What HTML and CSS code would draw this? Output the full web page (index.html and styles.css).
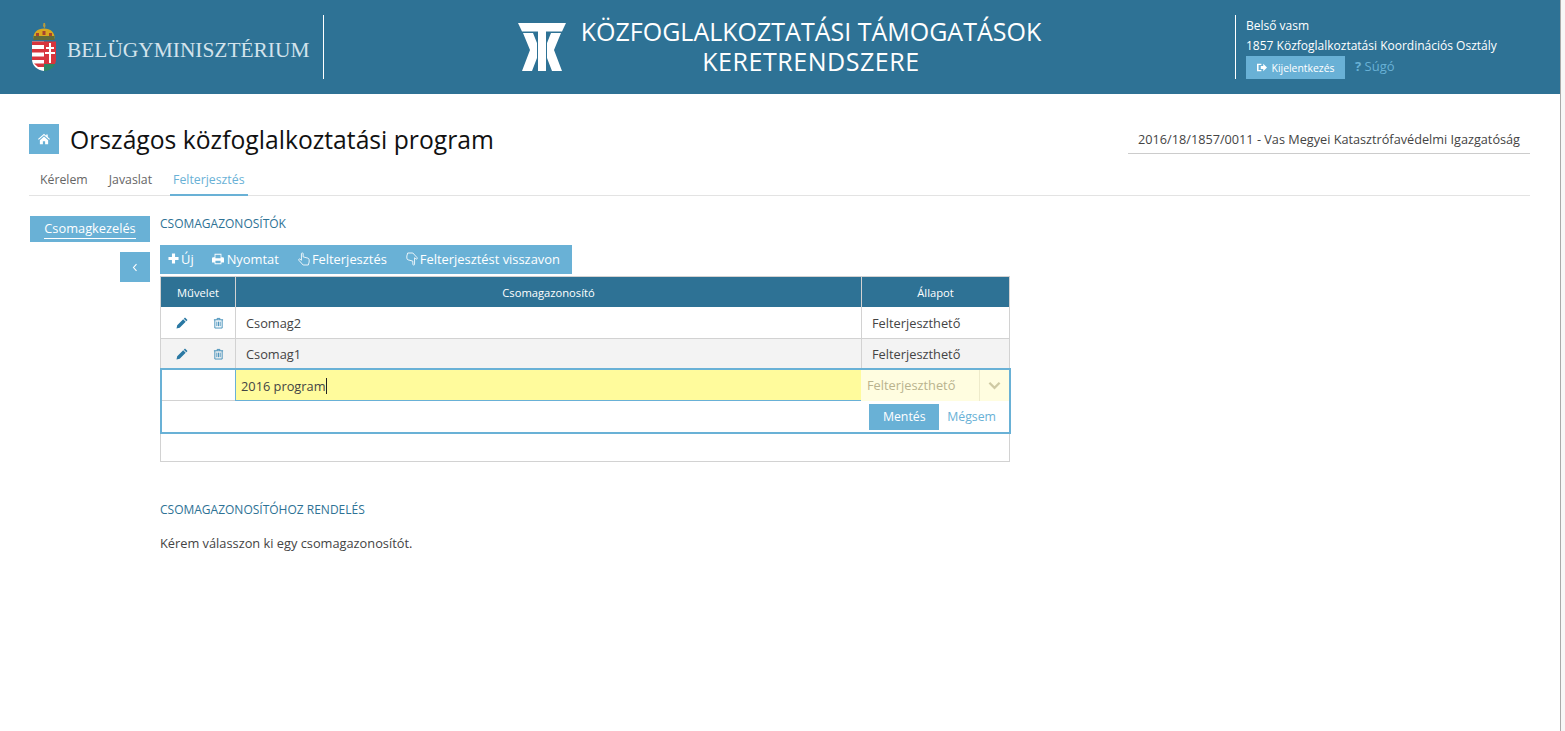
FILE: index.html
```html
<!DOCTYPE html>
<html lang="hu">
<head>
    <meta charset="utf-8">
    <title>Közfoglalkoztatási támogatások keretrendszere</title>
    <link rel="stylesheet" href="styles.css">
</head>
<body>
<div class="page">
    <header class="top-bar">
        <div class="ministry">
            <svg class="crest" viewBox="0 0 24 48" aria-hidden="true">
                <path d="M11.500 0h1.500l.5 3-1 2.500L11 3z" fill="#b79a3c"/>
                <path d="M1.500 15.500c-.5-6 4-10 10.500-10s11 4 10.500 10z" fill="#d9a81f"/>
                <path d="M1.500 13h21v4h-21z" fill="#5f6b3a"/>
                <path d="M4 10h3v3H4zM10.500 8h3v4h-3zM17 10h3v3h-3z" fill="#a5432e"/>
                <path d="M0 18.500h12V48C5 47 0 43 0 36z" fill="#fff"/>
                <path d="M0 18.500h12V22H0zM0 26h12v3.500H0zM0 33.500h12V37H0zM2 40.500h10V44H6z" fill="#d8353d"/>
                <path d="M12 18.500h12V36c0 2-.3 3.500-1 5H12z" fill="#d8353d"/>
                <path d="M12 41h11c-1.500 4-5 6.500-11 7z" fill="#2f8566"/>
                <path d="M17 20h2v4h3v2h-3v3h4v2h-4v9h-2v-9h-4v-2h4v-3h-3v-2h3z" fill="#fff"/>
            </svg>
            <span class="ministry-name">BELÜGYMINISZTÉRIUM</span>
        </div>
        <div class="app-title">
            <svg class="kt-logo" viewBox="0 0 48 48" aria-hidden="true">
                <path d="M0 0h48l-4 8.500H4z" fill="#fff"/>
                <path d="M5 10h10l4 10v15l-5 13H4l8-21z" fill="#fff"/>
                <path d="M43 10H33l-4 10v15l5 13h10l-8-21z" fill="#fff"/>
                <path d="M20 8h8v40h-8z" fill="#fff"/>
            </svg>
            <h2 class="app-name">
                <span class="app-line">KÖZFOGLALKOZTATÁSI TÁMOGATÁSOK</span>
                <span class="app-line app-line-second">KERETRENDSZERE</span>
            </h2>
        </div>
        <div class="user-box">
            <div class="user-line">Belső vasm</div>
            <div class="user-line">1857 Közfoglalkoztatási Koordinációs Osztály</div>
            <div class="user-actions">
                <a class="logout" href="#">
                    <svg class="icon icon-xs" viewBox="0 0 16 14"><path d="M0 1h7v2H2.500v8H7v2H0zM6 4.500h4V1l6 6-6 6V9.500H6z"/></svg>
                    Kijelentkezés
                </a>
                <a class="help" href="#"><b>?</b> Súgó</a>
            </div>
        </div>
    </header>

    <div class="content">
        <div class="title-row">
            <div class="title-left">
                <a class="home-btn" href="#">
                    <svg class="icon" viewBox="0 0 16 14"><path d="M8 0l3 2.600V1h2v3.400L16 7l-1 1-7-6-7 6-1-1zM2.500 8.500L8 3.800l5.500 4.700V14H9.500v-4h-3v4h-4z"/></svg>
                </a>
                <h1 class="page-title">Országos közfoglalkoztatási program</h1>
            </div>
            <div class="case-ref">2016/18/1857/0011 - Vas Megyei Katasztrófavédelmi Igazgatóság</div>
        </div>

        <nav class="tabs">
            <a class="tab" href="#">Kérelem</a>
            <a class="tab" href="#">Javaslat</a>
            <a class="tab tab-active" href="#">Felterjesztés</a>
        </nav>

        <div class="columns">
            <aside class="sidebar">
                <a class="side-item" href="#"><span>Csomagkezelés</span></a>
                <a class="side-toggle" href="#">
                    <svg class="icon icon-angle" viewBox="0 0 8 12"><path d="M6 1.500L2 6l4 4.500" fill="none" stroke="currentColor" stroke-width="1.500"/></svg>
                </a>
            </aside>

            <main class="main">
                <h3 class="section-title">Csomagazonosítók</h3>

                <div class="toolbar">
                    <a class="tool tool-new" href="#">
                        <svg class="icon icon-plus" viewBox="0 0 12 12"><path d="M4.300 .5h3.400v3.800h3.800v3.400H7.700v3.800H4.300V7.700H.5V4.300h3.800z"/></svg>
                        Új
                    </a>
                    <a class="tool" href="#">
                        <svg class="icon" viewBox="0 0 14 12"><path d="M3 0h8v4h1.500A1.500 1.500 0 0 1 14 5.500V10h-3v2H3v-2H0V5.500A1.500 1.500 0 0 1 1.500 4H3zm1 1v4h6V1zm0 7v3h6V8z" fill-rule="evenodd"/></svg>
                        Nyomtat
                    </a>
                    <a class="tool tool-hand" href="#">
                        <svg class="icon icon-hand" viewBox="0 0 14 15"><path d="M4 1.200c0-1 2-1 2 0V5l5.500 1.500c1 .3 1.500 1 1.500 2V11l-1 3.500H6L1 9c-.8-1 .6-2.200 1.500-1.200L4 9z" fill="none" stroke="currentColor"/></svg>
                        Felterjesztés
                    </a>
                    <a class="tool tool-hand" href="#">
                        <svg class="icon icon-hand" viewBox="0 0 14 15"><path d="M10 13.800c0 1-2 1-2 0V10L2.500 8.500c-1-.3-1.500-1-1.500-2V4l1-3.500h6L13 6c.8 1-.6 2.200-1.500 1.200L10 6z" fill="none" stroke="currentColor"/></svg>
                        Felterjesztést visszavon
                    </a>
                </div>

                <div class="grid">
                    <div class="grid-row grid-head">
                        <div class="cell">Művelet</div>
                        <div class="cell">Csomagazonosító</div>
                        <div class="cell">Állapot</div>
                    </div>
                    <div class="grid-row grid-row-first">
                        <div class="cell cell-actions">
                            <svg class="icon row-icon pen" viewBox="0 0 12 12"><path d="M9 .500l2.500 2.500-1.200 1.200-2.500-2.500zM7.200 2.300l2.500 2.500-6 6L.500 11.500l.7-3.200z"/></svg>
                            <svg class="icon row-icon bin" viewBox="0 0 12 12"><path d="M1 2.500h10M4.500 2.500V1h3v1.500M2 2.500v9h8v-9M4.200 4.500v5M6 4.500v5M7.800 4.500v5" fill="none" stroke="currentColor"/></svg>
                        </div>
                        <div class="cell">Csomag2</div>
                        <div class="cell">Felterjeszthető</div>
                    </div>
                    <div class="grid-row grid-row-alt">
                        <div class="cell cell-actions">
                            <svg class="icon row-icon pen" viewBox="0 0 12 12"><path d="M9 .500l2.500 2.500-1.200 1.200-2.500-2.500zM7.200 2.300l2.500 2.500-6 6L.500 11.500l.7-3.200z"/></svg>
                            <svg class="icon row-icon bin" viewBox="0 0 12 12"><path d="M1 2.500h10M4.500 2.500V1h3v1.500M2 2.500v9h8v-9M4.200 4.500v5M6 4.500v5M7.800 4.500v5" fill="none" stroke="currentColor"/></svg>
                        </div>
                        <div class="cell">Csomag1</div>
                        <div class="cell">Felterjeszthető</div>
                    </div>
                    <div class="edit-box">
                        <div class="edit-fields">
                            <div class="edit-blank"></div>
                            <div class="edit-input">2016 program<span class="caret"></span></div>
                            <div class="edit-select">
                                <span class="edit-select-value">Felterjeszthető</span>
                                <span class="edit-select-arrow">
                                    <svg class="icon chevron" viewBox="0 0 14 9"><path d="M1.500 1.500L7 7l5.500-5.500" fill="none" stroke="currentColor" stroke-width="2.500"/></svg>
                                </span>
                            </div>
                        </div>
                        <div class="edit-buttons">
                            <a class="save-btn" href="#">Mentés</a>
                            <a class="cancel-link" href="#">Mégsem</a>
                        </div>
                    </div>
                    <div class="grid-footer"></div>
                </div>

                <h3 class="section-title section-title-second">Csomagazonosítóhoz rendelés</h3>
                <p class="hint">Kérem válasszon ki egy csomagazonosítót.</p>
            </main>
        </div>
    </div>
</div>
<div class="scroll-track"></div>
</body>
</html>
```

FILE: styles.css
```css
* {
    box-sizing: border-box;
}
html, body {
    height: 100%;
}
body {
    margin: 0;
    display: flex;
    overflow: hidden;
    font-family: "Open Sans", sans-serif;
    font-size: 12.800px;
    color: #444;
    background-color: #fff;
}
a {
    text-decoration: none;
    color: inherit;
}
.page {
    width: 1560px;
    flex: none;
}
.scroll-track {
    flex: 1;
    background-color: #f7f7f7;
    border-left: 1px solid #a9a9a9;
}

.icon {
    width: 12px;
    height: 12px;
    fill: currentColor;
    flex: none;
}

/* header */
.top-bar {
    height: 94px;
    padding-top: 15px;
    background-color: #2e7295;
    color: #fff;
    display: flex;
    align-items: flex-start;
}
.ministry {
    width: 324px;
    height: 64px;
    padding-left: 32px;
    border-right: 1px solid #fff;
    display: flex;
    align-items: center;
}
.crest {
    width: 24px;
    height: 48px;
    flex: none;
}
.ministry-name {
    margin: 6px 0 0 11px;
    font-family: "Liberation Serif", serif;
    font-size: 21.400px;
    color: #d3e3ec;
    white-space: nowrap;
}
.app-title {
    width: 911px;
    height: 64px;
    padding-left: 194px;
    display: flex;
    align-items: center;
}
.kt-logo {
    width: 48px;
    height: 48px;
    flex: none;
}
.app-name {
    width: 490px;
    margin: -2px 0 0;
    font-size: 25px;
    font-weight: 400;
    line-height: 30px;
    text-align: center;
    white-space: nowrap;
}
.app-line {
    display: block;
}
.app-line-second {
    letter-spacing: .55px;
}
.user-box {
    height: 64px;
    padding: 1px 0 0 10px;
    border-left: 1px solid #fff;
    font-size: 12px;
}
.user-line {
    height: 20px;
    line-height: 20px;
    white-space: nowrap;
}
.user-actions {
    display: flex;
    align-items: flex-start;
}
.logout {
    width: 99px;
    height: 23px;
    background-color: #69b1d6;
    font-size: 10.400px;
    display: flex;
    align-items: center;
    justify-content: center;
    gap: 5px;
}
.icon-xs {
    width: 10px;
    height: 9px;
}
.help {
    margin-left: 10px;
    font-size: 13px;
    line-height: 20px;
    color: #69b1d6;
}

/* title */
.content {
    padding: 0 30px 0 29px;
}
.title-row {
    padding-top: 30px;
    display: flex;
    justify-content: space-between;
}
.title-left {
    display: flex;
    align-items: flex-start;
}
.home-btn {
    width: 30px;
    height: 30px;
    background-color: #69b1d6;
    color: #fff;
    display: flex;
    align-items: center;
    justify-content: center;
}
.page-title {
    margin: 0 0 0 11px;
    padding-top: 2px;
    font-size: 24.700px;
    font-weight: 400;
    line-height: 28px;
    color: #111;
}
.case-ref {
    height: 30px;
    padding: 0 10px;
    border-bottom: 1px solid #ccc;
    font-size: 12.700px;
    line-height: 30px;
    white-space: nowrap;
}

/* tabs */
.tabs {
    height: 42px;
    padding: 15px 0 0 8px;
    border-bottom: 1px solid #e3e3e3;
    font-size: 12.300px;
    display: flex;
    gap: 15px;
}
.tab {
    height: 27px;
    padding: 2px 3px 0;
    color: #666;
}
.tab-active {
    color: #69b1d6;
    border-bottom: 2px solid #69b1d6;
}

/* columns */
.columns {
    padding-top: 20px;
    display: flex;
}
.sidebar {
    width: 121px;
    margin-right: 10px;
    flex: none;
    display: flex;
    flex-direction: column;
    align-items: flex-end;
    gap: 10px;
}
.side-item {
    width: 120px;
    height: 26px;
    background-color: #69b1d6;
    color: #fff;
    line-height: 25px;
    text-align: center;
}
.side-item span {
    border-bottom: 1px solid #fff;
    padding-bottom: 1px;
}
.side-toggle {
    width: 30px;
    height: 30px;
    background-color: #69b1d6;
    color: #fff;
    display: flex;
    align-items: center;
    justify-content: center;
}
.icon-angle {
    width: 8px;
    height: 9px;
}
.main {
    width: 850px;
    flex: none;
}
.section-title {
    margin: 0;
    height: 29px;
    font-size: 12px;
    font-weight: 400;
    line-height: 16px;
    text-transform: uppercase;
    color: #2e7295;
}
.section-title-second {
    margin-top: 40px;
    height: auto;
}

/* toolbar */
.toolbar {
    width: 412px;
    height: 29px;
    padding: 0 0 2px 8px;
    background-color: #69b1d6;
    color: #fff;
    font-size: 12.900px;
    display: flex;
    align-items: center;
    gap: 19px;
}
.tool {
    display: flex;
    align-items: center;
    gap: 3px;
    white-space: nowrap;
}
.tool-new {
    gap: 2px;
    margin-right: -1px;
}
.tool-hand {
    gap: 2px;
}
.icon-plus {
    width: 11px;
    height: 11px;
}
.icon-hand {
    height: 14px;
}

/* grid */
.grid {
    margin-top: 2px;
    border-top: 1px solid #d2d2d2;
}
.grid-row {
    height: 30px;
    border-left: 1px solid #d2d2d2;
    border-right: 1px solid #d2d2d2;
    display: grid;
    grid-template-columns: 74px 626px 1fr;
}
.grid-row .cell {
    padding-left: 10px;
    border-left: 1px solid #d2d2d2;
    display: flex;
    align-items: center;
}
.grid-row .cell:first-child {
    border-left: none;
}
.grid-row-first {
    height: 32px;
    border-bottom: 1px solid #d2d2d2;
}
.grid-row-alt {
    height: 29px;
    background-color: #f3f3f3;
}
.grid-head {
    background-color: #2e7295;
    color: #fff;
    font-size: 11.200px;
}
.grid-head .cell {
    padding-left: 0;
    justify-content: center;
}
.grid-row .cell-actions {
    padding: 0 11px 0 15px;
    justify-content: space-between;
}
.pen {
    color: #2a78a3;
}
.bin {
    width: 11px;
    color: #3f8cb8;
}

/* edit row */
.edit-box {
    width: 851px;
    height: 66px;
    border: 2px solid #69b1d6;
}
.edit-fields {
    height: 31px;
    border-bottom: 1px solid #d2d2d2;
    display: grid;
    grid-template-columns: 73px 626px 1fr;
}
.edit-input {
    padding: 1px 0 0 5px;
    background-color: #fffb9c;
    border-left: 1px solid #69b1d6;
    border-bottom: 1px solid #69b1d6;
    display: flex;
    align-items: center;
}
.caret {
    width: 1px;
    height: 16px;
    background-color: #222;
}
.edit-select {
    background-color: #fffde0;
    display: flex;
    align-items: stretch;
    color: #b9b38e;
}
.edit-select-value {
    width: 118px;
    padding-left: 6px;
    line-height: 31px;
}
.edit-select-arrow {
    flex: 1;
    border-left: 1px solid #eeebcb;
    display: flex;
    align-items: center;
    justify-content: center;
    color: #cfcaa4;
}
.chevron {
    width: 13px;
    height: 9px;
}
.edit-buttons {
    height: 31px;
    padding: 3px 13px 0 0;
    font-size: 12.300px;
    display: flex;
    justify-content: flex-end;
    align-items: flex-start;
    gap: 8px;
}
.save-btn {
    width: 70px;
    height: 26px;
    background-color: #69b1d6;
    color: #fff;
    line-height: 25px;
    text-align: center;
}
.cancel-link {
    color: #69b1d6;
    line-height: 25px;
}
.grid-footer {
    height: 28px;
    border-left: 1px solid #d2d2d2;
    border-right: 1px solid #d2d2d2;
    border-bottom: 1px solid #d2d2d2;
}

.hint {
    margin: 17px 0 0;
    line-height: 16px;
}
```
